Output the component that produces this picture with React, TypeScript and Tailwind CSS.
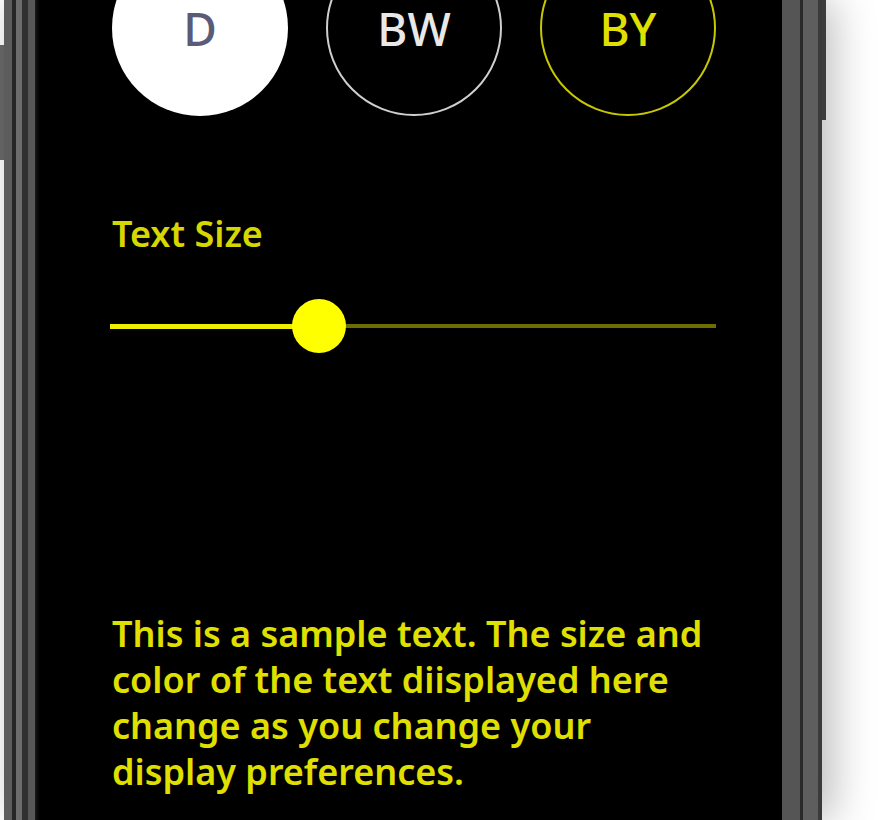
import React, { useState } from 'react';

const yellow = '#e0e000';

export default function App() {
  const [size] = useState(36);

  return (
    <div className="relative flex h-[820px] w-[890px] overflow-hidden bg-white" style={{ fontFamily: '"Noto Sans", sans-serif' }}>
      {/* left side button */}
      <div className="flex w-[4px] flex-col">
        <div className="h-[45px] bg-white" />
        <div className="h-[115px] bg-[#6a6a6a]" />
        <div className="flex-1 bg-white" />
      </div>

      {/* phone frame */}
      <div className="relative flex w-[818px] shadow-[10px_0_40px_rgba(0,0,0,0.28)]">
        <div className="flex flex-1 border-l-[8px] border-r-[4px] border-l-[#5c5c5c] border-r-[#3a3a3a]">
          <div className="flex flex-1 border-l-[4px] border-r-[15px] border-l-[#262626] border-r-[#5e5e5e]">
            <div className="flex flex-1 border-l-[6px] border-r-[3px] border-l-[#6c6c6c] border-r-[#2a2a2a]">
              <div className="flex flex-1 border-l-[6px] border-r-[18px] border-l-[#303030] border-r-[#555555]">
                <div className="flex flex-1 border-l-[7px] border-l-[#575757]">
                  <Screen size={size} />
                </div>
              </div>
            </div>
          </div>
        </div>
        {/* right side button */}
        <div className="absolute right-[-4px] top-0 h-[120px] w-[4px] bg-[#3c3c3c]" />
      </div>
    </div>
  );
}

function Screen({ size }: { size: number }) {
  return (
    <div className="flex flex-1 flex-col bg-gradient-to-r from-[#1a1a1a] from-0% via-black via-[1%] to-black pl-[77px] pr-[66px]">
      <div className="-mt-[60px] flex gap-[38px]">
        <div className="flex h-[176px] w-[176px] items-center justify-center rounded-full bg-white text-[46px] font-medium text-[#5b5b78]">
          D
        </div>
        <div className="flex h-[176px] w-[176px] items-center justify-center rounded-full border-2 border-[#cfcfcf] text-[46px] font-medium text-[#e8e8e8]">
          BW
        </div>
        <div className="flex h-[176px] w-[176px] items-center justify-center rounded-full border-2 border-[#c8c800] text-[46px] font-medium text-[#e0e000]">
          BY
        </div>
      </div>

      <div className="mt-[100px] text-[36px] font-semibold leading-none text-[#d6d600]">Text Size</div>

      <div className="relative mt-[47px] flex h-[54px] items-center">
        <div className="-ml-[2px] h-[5px] w-[210px] bg-[#eeee00]" />
        <div className="h-[4px] flex-1 bg-[#6e6e00]" />
        <div className="absolute left-[180px] top-0 h-[54px] w-[54px] rounded-full bg-[#ffff00]" />
      </div>

      <p className="mt-[258px] font-semibold leading-[46px]" style={{ fontSize: size, color: yellow }}>
        This is a sample text. The size and color of the text diisplayed here change as you change your display
        preferences.
      </p>
    </div>
  );
}
